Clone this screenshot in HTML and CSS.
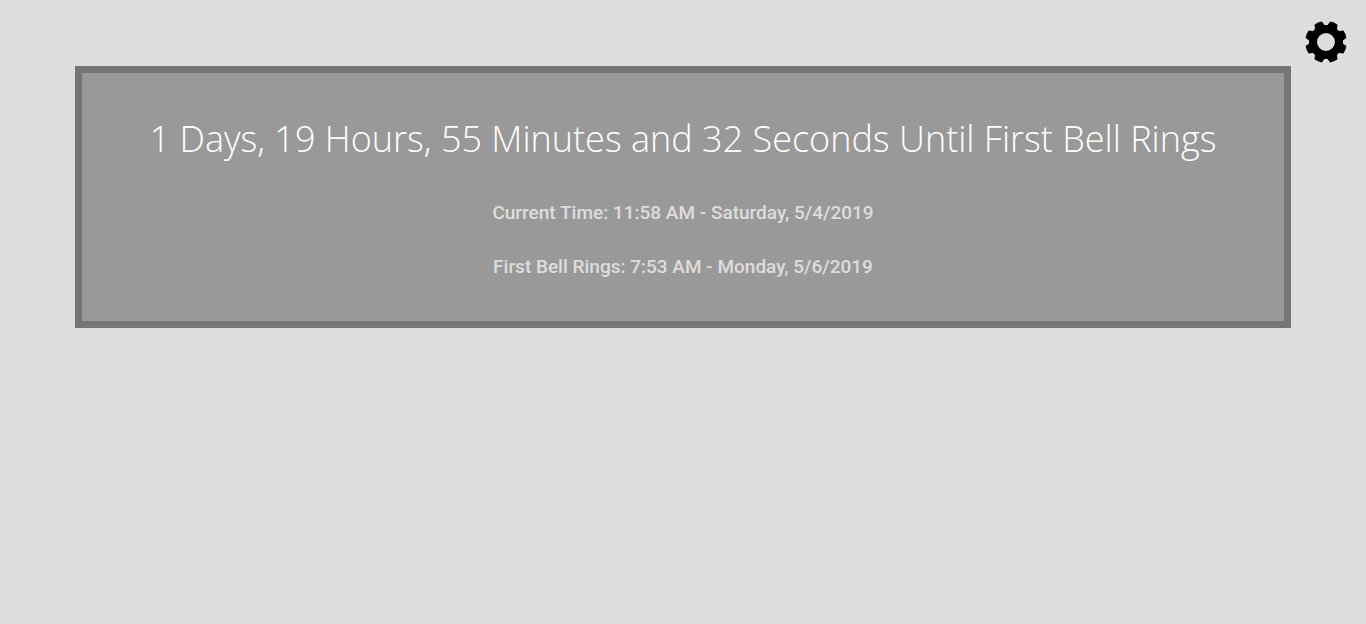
FILE: index.html
```html
<!DOCTYPE html>
<html lang="en">
<head>
<meta charset="utf-8">
<meta name="viewport" content="width=device-width, initial-scale=1">
<title>Bell Countdown</title>
<link rel="stylesheet" href="styles.css">
</head>
<body>
<header class="toolbar">
<button class="settings" type="button" aria-label="Settings">
<svg class="gear" viewBox="-22 -22 44 44" aria-hidden="true">
<defs><path id="teeth" d="M-5.4 -14 L-4.9 -17 L-4 -20.4 Q0 -21.5 4 -20.4 L4.9 -17 L5.4 -14 Z M-5.4 14 L-4.9 17 L-4 20.4 Q0 21.5 4 20.4 L4.9 17 L5.4 14 Z"/></defs>
<circle r="13" fill="none" stroke="#000" stroke-width="8"/>
<use href="#teeth" transform="rotate(22.5)"/>
<use href="#teeth" transform="rotate(67.5)"/>
<use href="#teeth" transform="rotate(112.5)"/>
<use href="#teeth" transform="rotate(157.5)"/>
</svg>
</button>
</header>
<main class="countdown">
<h1 class="remaining">1 Days, 19 Hours, 55 Minutes and 32 Seconds Until First Bell Rings</h1>
<p class="detail">Current Time: 11:58 AM - Saturday, 5/4/2019</p>
<p class="detail">First Bell Rings: 7:53 AM - Monday, 5/6/2019</p>
</main>
</body>
</html>
```
FILE: styles.css
```css
body {
  margin: 0;
  background: #ddd;
  font-family: "Open Sans", sans-serif;
}
.toolbar {
  display: flex;
  justify-content: flex-end;
  height: 46px;
  padding: 20px 18px 0;
}
.settings {
  width: 44px;
  height: 44px;
  padding: 0;
  border: 0;
  background: none;
  cursor: pointer;
}
.gear {
  display: block;
  width: 44px;
  height: 44px;
}
.countdown {
  margin: 0 75px;
  padding: 38px 24px 40px;
  border: 7px solid #757575;
  background: #999;
  text-align: center;
}
.remaining {
  margin: 0 0 32px;
  color: #fff;
  font-size: 36px;
  font-weight: 300;
  line-height: 56px;
}
.detail {
  margin: 0 0 26px;
  color: #ddd;
  font-family: Roboto, sans-serif;
  font-size: 19px;
  font-weight: 500;
  line-height: 28px;
}
.detail:last-child {
  margin-bottom: 0;
}
```
